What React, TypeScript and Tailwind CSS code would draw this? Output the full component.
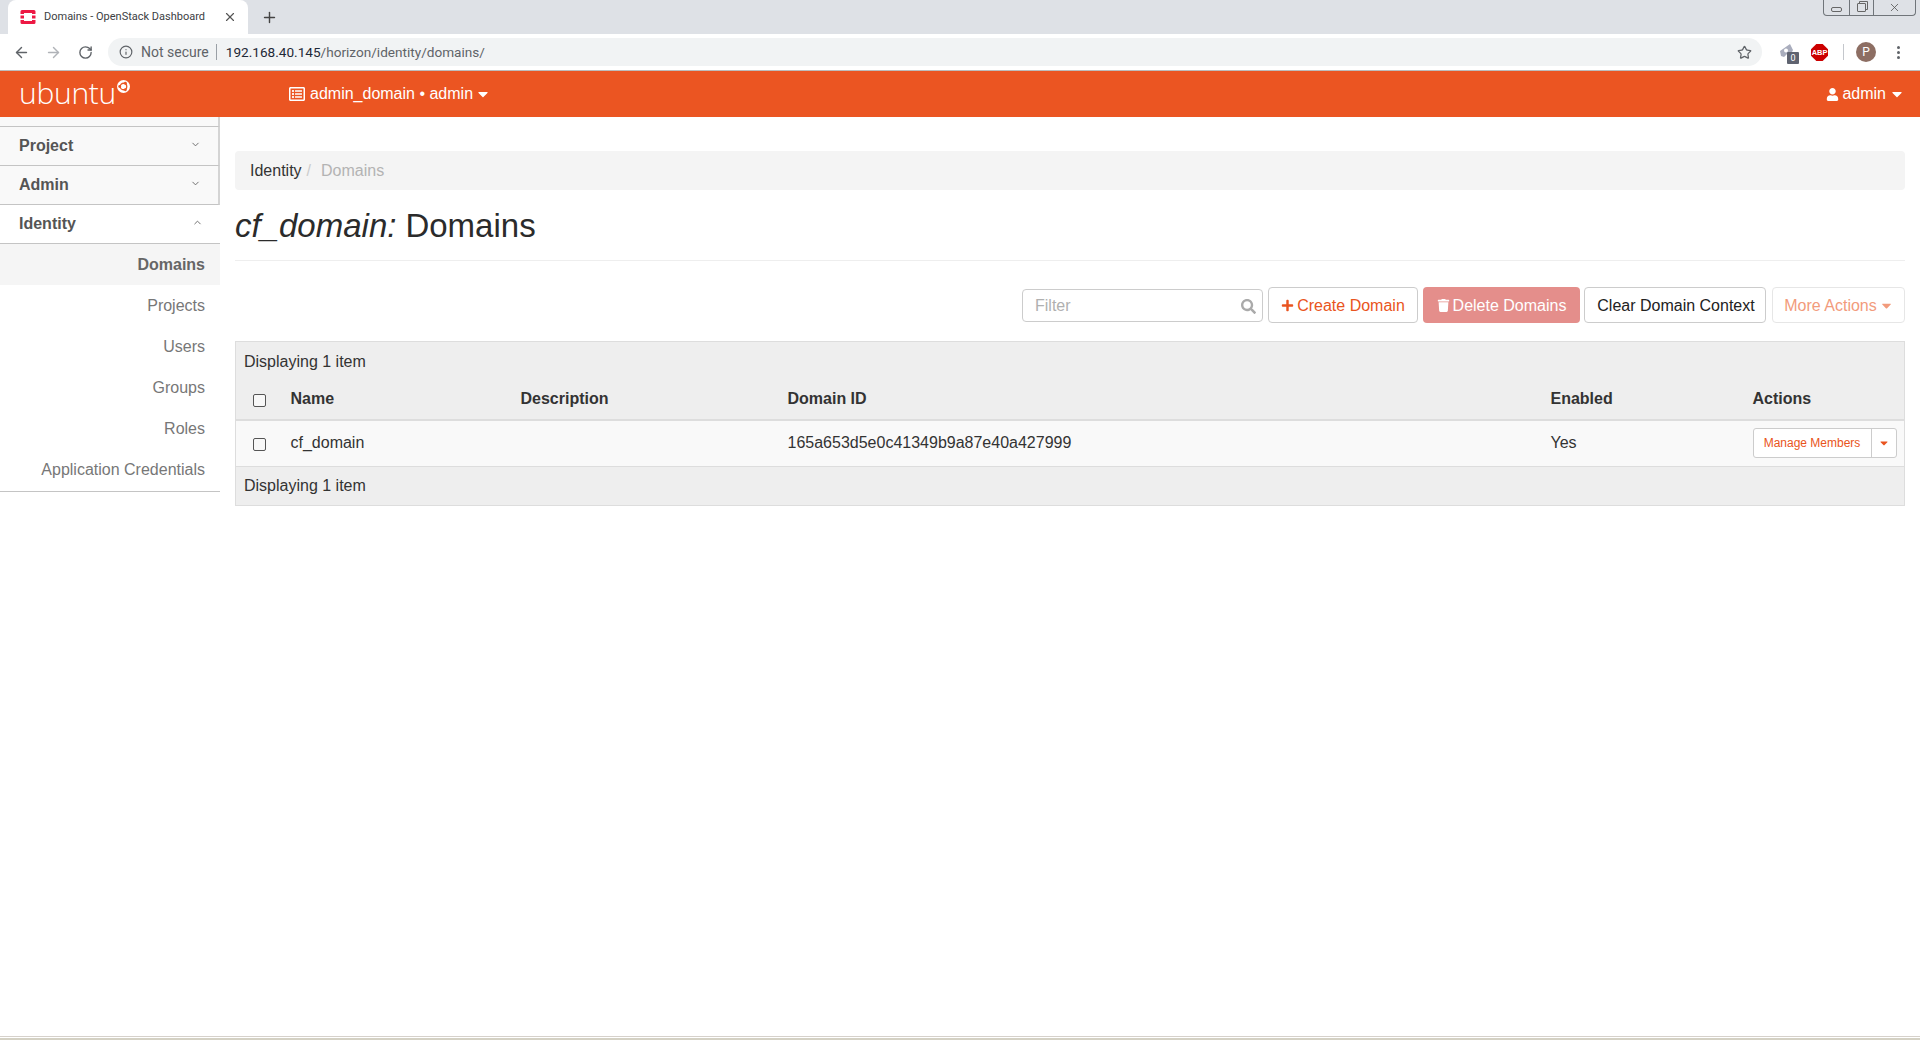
import { ChevronDown, ChevronUp, ArrowLeft, ArrowRight, RotateCw, Info, Star, Plus, X } from "lucide-react";
import { FaCaretDown, FaPlus, FaRegListAlt, FaSearch, FaTrash, FaUser } from "react-icons/fa";

const subItems = ["Projects", "Users", "Groups", "Roles", "Application Credentials"];

function SideHead({ label, open }: { label: string; open?: boolean }) {
  return (
    <div
      className={`h-[39px] flex items-center justify-between pl-[19px] pr-[17px] border-b border-[#c4c4c4] ${
        open ? "bg-white" : "bg-[#f9f9f9] border-r-2 border-r-[#d4d4d4]"
      }`}
    >
      <span className="font-bold text-[16px] text-[#555]">{label}</span>
      {open ? (
        <ChevronUp size={11} strokeWidth={2} className="text-[#666] -mt-[3px]" />
      ) : (
        <ChevronDown size={11} strokeWidth={2} className="text-[#666] -mt-[3px]" />
      )}
    </div>
  );
}

function CheckBox() {
  return <span className="block w-[13px] h-[13px] mx-auto mt-[2px] rounded-[2px] border border-[#555] bg-[#f8f8f8]" />;
}

function UbuntuMark() {
  return (
    <svg viewBox="0 0 24 24" className="w-[13px] h-[13px] mt-[-16px] ml-[1px]">
      <circle cx="12" cy="12" r="12" fill="#fff" />
      <circle cx="12" cy="12" r="6" fill="none" stroke="#eb5522" strokeWidth="2.4" />
      <circle cx="5" cy="12" r="2.6" fill="#eb5522" />
      <circle cx="15.5" cy="6" r="2.6" fill="#eb5522" />
      <circle cx="15.5" cy="18" r="2.6" fill="#eb5522" />
    </svg>
  );
}

export default function App() {
  return (
    <div className="h-[1040px] w-[1920px] flex flex-col overflow-hidden bg-white font-['Liberation_Sans',Arial,sans-serif] text-[#333]">
      {/* TABS */}
      <div className="h-[34px] shrink-0 bg-[#dee1e6] flex items-end relative">
        <div className="ml-[8px] w-[240px] h-[34px] bg-white rounded-t-[8px] flex items-center pl-[12px] pr-[11px]">
          <svg viewBox="0 0 16 16" className="w-[16px] h-[16px] shrink-0">
            <path
              fill="#ed1944"
              d="M2 1h12a1.500 1.500 0 0 1 1.500 1.500V5h-3.500V4H4v1H.5V2.500A1.500 1.500 0 0 1 2 1zM.5 6.500H4v3H.5zM12 6.500h3.500v3H12zM.5 11H4v1h8v-1h3.500v2.500A1.500 1.500 0 0 1 14 15H2a1.500 1.500 0 0 1-1.500-1.500z"
            />
          </svg>
          <span className="ml-[8px] text-[11px] text-[#3c4043] font-['Roboto',sans-serif] whitespace-nowrap">
            Domains - OpenStack Dashboard
          </span>
          <X size={14} strokeWidth={2} className="ml-auto text-[#555]" />
        </div>
        <Plus size={17} strokeWidth={2} className="ml-[13px] mb-[8px] text-[#444]" />
        {/* window buttons */}
        <div className="absolute top-0 right-[4px] h-[16px] w-[93px] flex border border-t-0 border-[#70757a] rounded-b-[4px] text-[#555]">
          <div className="w-[26px] flex items-center justify-center border-r border-[#70757a]">
            <span className="block w-[11px] h-[5px] border border-[#666] rounded-[2px] mt-[3px]" />
          </div>
          <div className="w-[24px] flex items-center justify-center border-r border-[#70757a]">
            <span className="block w-[9px] h-[9px] border border-[#666] rounded-[1px] shadow-[2px_-2px_0_-1px_#dee1e6,2px_-2px_0_0_#666]" />
          </div>
          <div className="flex-1 flex items-center justify-center">
            <X size={13} strokeWidth={1.5} />
          </div>
        </div>
      </div>

      {/* TOOLBAR */}
      <div className="h-[36px] shrink-0 bg-white flex items-center border-b border-[#bdbdbd] box-content font-['Roboto',sans-serif]">
        <ArrowLeft size={17} strokeWidth={2} className="ml-[13px] text-[#5f6368]" />
        <ArrowRight size={17} strokeWidth={2} className="ml-[15px] text-[#b0b3b8]" />
        <RotateCw size={15} strokeWidth={2.2} className="ml-[16px] text-[#5f6368]" />
        <div className="ml-[15px] w-[1654px] h-[28px] rounded-[14px] bg-[#f1f3f4] flex items-center pl-[11px] pr-[10px]">
          <Info size={14} strokeWidth={2} className="text-[#5f6368]" />
          <span className="ml-[8px] text-[14px] text-[#5f6368]">Not secure</span>
          <span className="ml-[7px] w-px h-[16px] bg-[#9aa0a6]" />
          <span className="ml-[9px] text-[13.6px] text-[#1f2937] whitespace-nowrap">
            192.168.40.145<span className="text-[#5f6368]">/horizon/identity/domains/</span>
          </span>
          <Star size={15} strokeWidth={2} className="ml-auto text-[#5f6368]" />
        </div>
        <div className="relative ml-[16px] w-[18px] h-[18px] -mt-[2px]">
          <svg viewBox="0 0 18 18" className="w-[18px] h-[18px]">
            <path d="M2 9l10-7 3 6-3 6-3-2-3 3-3-1z" fill="#a9adbd" />
            <circle cx="8" cy="8.500" r="2" fill="#fff" />
          </svg>
          <span className="absolute left-[9px] top-[10px] w-[12px] h-[12px] rounded-[1px] bg-[#5f6370] text-white text-[9px] leading-[12px] text-center">
            0
          </span>
        </div>
        <svg viewBox="0 0 16 16" className="ml-[15px] w-[17px] h-[17px]">
          <polygon points="5,0 11,0 16,5 16,11 11,16 5,16 0,11 0,5" fill="#c00" />
          <text x="8" y="10.800" textAnchor="middle" fontSize="7" fontWeight="700" fill="#fff" fontFamily="Liberation Sans">
            ABP
          </text>
        </svg>
        <span className="ml-[15px] w-px h-[16px] bg-[#c4c7cc]" />
        <span className="ml-[12px] w-[20px] h-[20px] rounded-full bg-[#8d6e63] text-white text-[12px] leading-[20px] text-center">
          P
        </span>
        <span className="ml-[21px] flex flex-col gap-[2px]">
          <span className="w-[3px] h-[3px] rounded-full bg-[#5f6368]" />
          <span className="w-[3px] h-[3px] rounded-full bg-[#5f6368]" />
          <span className="w-[3px] h-[3px] rounded-full bg-[#5f6368]" />
        </span>
      </div>

      {/* NAVBAR */}
      <div className="h-[46px] shrink-0 bg-[#eb5522] text-white flex items-center">
        <div className="w-[289px] pl-[19px] flex items-center">
          <span className="text-[30px] font-['Open_Sans',sans-serif] font-light leading-none -mt-[3px] tracking-[-0.3px]">
            ubuntu
          </span>
          <UbuntuMark />
        </div>
        <FaRegListAlt size={16} />
        <span className="ml-[5px] text-[16px] whitespace-nowrap">admin_domain • admin</span>
        <FaCaretDown size={16} className="ml-[2px]" />
        <div className="ml-auto mr-[15px] flex items-center">
          <FaUser size={13} />
          <span className="ml-[3px] text-[16px]">admin</span>
          <FaCaretDown size={16} className="ml-[3px]" />
        </div>
      </div>

      <div className="flex flex-1 min-h-0">
        {/* SIDEBAR */}
        <div className="w-[220px] shrink-0">
          <div className="h-[9px] bg-[#f9f9f9] border-b border-[#c4c4c4] border-r-2 border-r-[#d4d4d4] box-content" />
          <SideHead label="Project" />
          <SideHead label="Admin" />
          <SideHead label="Identity" open />
          <div className="border-b border-[#c4c4c4] text-right text-[16px] text-[#777]">
            <div className="h-[41px] leading-[41px] pr-[15px] bg-[#f5f5f5] font-bold text-[#666]">Domains</div>
            {subItems.map((s) => (
              <div key={s} className="h-[41px] leading-[41px] pr-[15px]">
                {s}
              </div>
            ))}
            <div className="h-[1px]" />
          </div>
        </div>

        {/* MAIN */}
        <div className="flex-1 pl-[15px] pr-[15px] pt-[34px] min-w-0">
          <div className="h-[39px] bg-[#f4f4f4] rounded-[4px] flex items-center pl-[15px] text-[16px]">
            <span>Identity</span>
            <span className="ml-[5px] text-[#ccc]">/</span>
            <span className="ml-[10px] text-[#b3b3b3]">Domains</span>
          </div>
          <div className="h-[71px] border-b border-[#eee] flex items-center text-[33px] text-[#2b2b2b] pt-[2px]">
            <em className="italic">cf_domain:</em>
            <span className="ml-[9px]">Domains</span>
          </div>

          <div className="mt-[26px] h-[36px] flex items-center justify-end text-[16px]">
            <div className="w-[241px] h-[33px] pt-[1px] border border-[#ccc] rounded-[4px] flex items-center pl-[12px] pr-[6px] text-[#b0b0b0]">
              <span>Filter</span>
              <FaSearch size={15} className="ml-auto mt-[2px] text-[#aaa]" />
            </div>
            <div className="ml-[5px] w-[150px] h-[36px] pt-[1px] border border-[#ccc] rounded-[4px] flex items-center justify-center text-[#e95420]">
              <FaPlus size={13} className="mr-[3px]" />
              Create Domain
            </div>
            <div className="ml-[5px] w-[157px] h-[36px] pt-[1px] rounded-[4px] bg-[#e48e8b] text-white flex items-center justify-center">
              <FaTrash size={13} className="mr-[3px]" />
              Delete Domains
            </div>
            <div className="ml-[4px] w-[182px] h-[36px] pt-[1px] pl-[2px] border border-[#ccc] rounded-[4px] flex items-center justify-center text-[#222]">
              Clear Domain Context
            </div>
            <div className="ml-[6px] w-[133px] h-[36px] pt-[1px] pl-[1px] border border-[#e6e6e6] rounded-[4px] flex items-center justify-center text-[#f29b7c]">
              More Actions
              <FaCaretDown size={15} className="ml-[2px]" />
            </div>
          </div>

          {/* TABLE */}
          <table className="mt-[18px] w-full table-fixed border-collapse border border-[#ddd] text-[16px]">
            <colgroup>
              <col className="w-[47px]" />
              <col className="w-[230px]" />
              <col className="w-[267px]" />
              <col className="w-[763px]" />
              <col className="w-[202px]" />
              <col />
            </colgroup>
            <thead className="bg-[#eee]">
              <tr>
                <td colSpan={6} className="h-[38px] pl-[8px] pt-[2px]">
                  Displaying 1 item
                </td>
              </tr>
              <tr className="border-b-[2px] border-[#ddd] font-bold">
                <th className="h-[40px]">
                  <CheckBox />
                </th>
                <th className="text-left pl-[8px]">Name</th>
                <th className="text-left pl-[8px]">Description</th>
                <th className="text-left pl-[8px]">Domain ID</th>
                <th className="text-left pl-[8px]">Enabled</th>
                <th className="text-left pl-[8px]">Actions</th>
              </tr>
            </thead>
            <tbody>
              <tr className="bg-[#f9f9f9] border-b border-[#ddd]">
                <td className="h-[47px]">
                  <CheckBox />
                </td>
                <td className="pl-[8px]">cf_domain</td>
                <td />
                <td className="pl-[8px]">165a653d5e0c41349b9a87e40a427999</td>
                <td className="pl-[8px]">Yes</td>
                <td className="pl-[8px]">
                  <div className="inline-flex align-middle h-[30px] w-[144px] border border-[#ccc] rounded-[3px] bg-white text-[#e95420] text-[12px]">
                    <span className="flex-1 flex items-center justify-center border-r border-[#ccc]">Manage Members</span>
                    <span className="w-[24px] flex items-center justify-center">
                      <FaCaretDown size={12} />
                    </span>
                  </div>
                </td>
              </tr>
            </tbody>
            <tfoot className="bg-[#eee]">
              <tr>
                <td colSpan={6} className="h-[39px] pl-[8px]">
                  Displaying 1 item
                </td>
              </tr>
            </tfoot>
          </table>
        </div>
      </div>

      {/* bottom edge of window */}
      <div className="h-[4px] shrink-0 flex flex-col">
        <div className="h-px bg-[#d6d1cb]" />
        <div className="h-px bg-white" />
        <div className="h-[2px] bg-[#d4d1c4]" />
      </div>
    </div>
  );
}
